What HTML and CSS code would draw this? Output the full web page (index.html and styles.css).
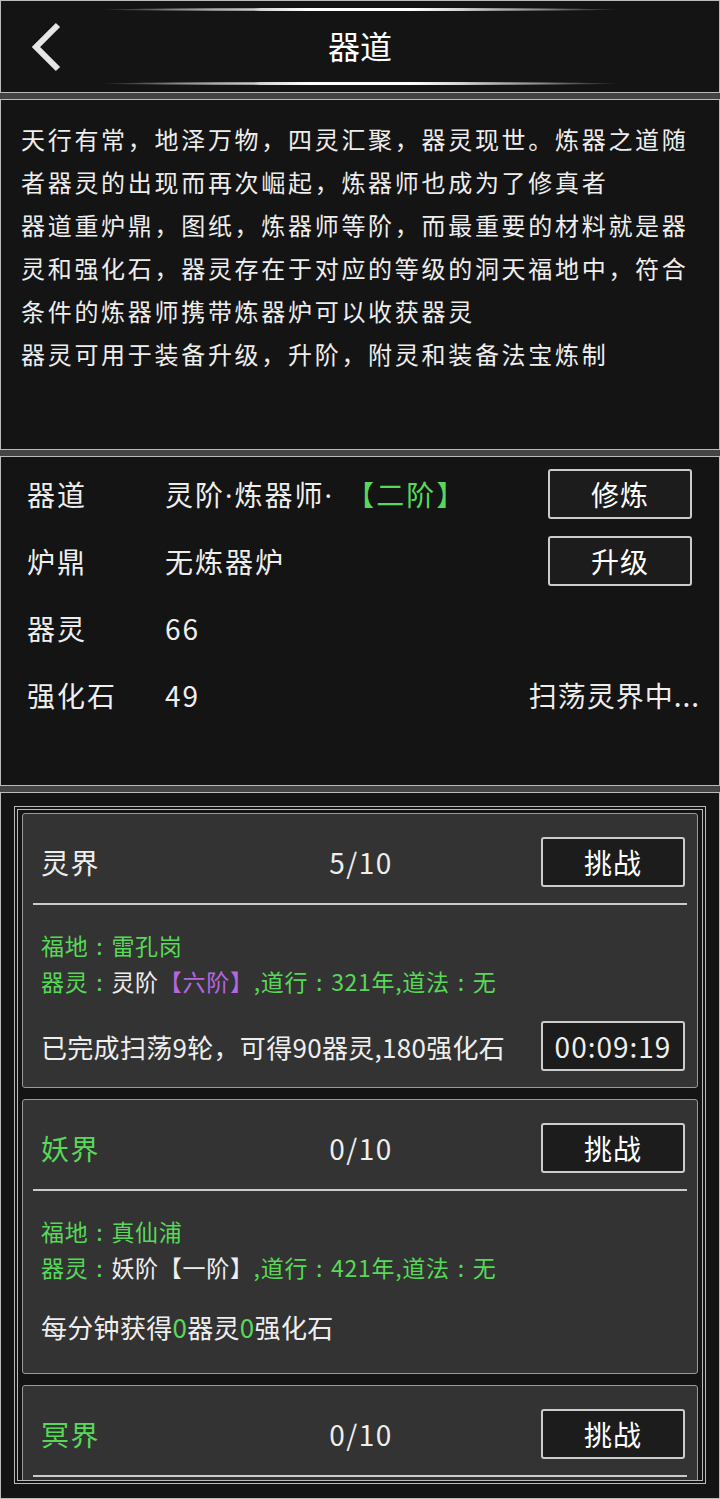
FILE: index.html
```html
<!DOCTYPE html>
<html lang="zh-CN">
  <head>
    <meta charset="UTF-8">
    <meta name="viewport" content="width=device-width, initial-scale=1.0">
    <title>器道</title>
    <link rel="stylesheet" href="styles.css">
  </head>
  <body>
    <div class="screen">
      <!-- Title bar -->
      <header class="panel topbar">
        <div class="glow"></div>
        <div class="topbar-row">
          <span class="back">
            <svg width="34" height="50" viewBox="0 0 34 50"><polyline points="28,3 6,25 28,47" fill="none" stroke="#e6e6e6" stroke-width="6"/></svg>
          </span>
          <h1>器道</h1>
          <span></span>
        </div>
        <div class="glow"></div>
      </header>

      <!-- Intro text -->
      <section class="panel intro">
        <p>天行有常，地泽万物，四灵汇聚，器灵现世。炼器之道随者器灵的出现而再次崛起，炼器师也成为了修真者</p>
        <p>器道重炉鼎，图纸，炼器师等阶，而最重要的材料就是器灵和强化石，器灵存在于对应的等级的洞天福地中，符合条件的炼器师携带炼器炉可以收获器灵</p>
        <p>器灵可用于装备升级，升阶，附灵和装备法宝炼制</p>
      </section>

      <!-- Stats -->
      <section class="panel stats">
        <div class="stat-row">
          <span class="stat-label">器道</span>
          <span class="stat-value">灵阶<span class="dot">·</span>炼器师<span class="dot">·</span> <span class="green">【二阶】</span></span>
          <button class="btn">修炼</button>
        </div>
        <div class="stat-row">
          <span class="stat-label">炉鼎</span>
          <span class="stat-value">无炼器炉</span>
          <button class="btn">升级</button>
        </div>
        <div class="stat-row">
          <span class="stat-label">器灵</span>
          <span class="stat-value">66</span>
          <span></span>
        </div>
        <div class="stat-row">
          <span class="stat-label">强化石</span>
          <span class="stat-value">49</span>
          <span class="stat-note">扫荡灵界中...</span>
        </div>
      </section>

      <!-- Realms list -->
      <section class="panel realms">
        <div class="realm-frame">
          <div class="realm-card">
            <div class="realm-head">
              <span class="realm-name">灵界</span>
              <span class="realm-count">5/10</span>
              <button class="btn">挑战</button>
            </div>
            <div class="realm-sep"></div>
            <div class="realm-info">
              <div class="green">福地<span class="colon">:</span>雷孔岗</div>
              <div class="green">器灵<span class="colon">:</span><span class="white">灵阶</span><span class="purple">【六阶】</span>,道行<span class="colon">:</span>321年,道法<span class="colon">:</span>无</div>
            </div>
            <div class="realm-status">
              <span>已完成扫荡9轮，可得90器灵,180强化石</span>
              <span class="timer">00:09:19</span>
            </div>
          </div>

          <div class="realm-card">
            <div class="realm-head">
              <span class="realm-name green">妖界</span>
              <span class="realm-count">0/10</span>
              <button class="btn">挑战</button>
            </div>
            <div class="realm-sep"></div>
            <div class="realm-info">
              <div class="green">福地<span class="colon">:</span>真仙浦</div>
              <div class="green">器灵<span class="colon">:</span><span class="white">妖阶【一阶】</span>,道行<span class="colon">:</span>421年,道法<span class="colon">:</span>无</div>
            </div>
            <div class="realm-status plain">
              <span>每分钟获得<span class="green">0</span>器灵<span class="green">0</span>强化石</span>
            </div>
          </div>

          <div class="realm-card">
            <div class="realm-head">
              <span class="realm-name green">冥界</span>
              <span class="realm-count">0/10</span>
              <button class="btn">挑战</button>
            </div>
            <div class="realm-sep"></div>
          </div>
        </div>
      </section>
    </div>
  </body>
</html>
```

FILE: styles.css
```css
* {
  box-sizing: border-box;
}

body {
  margin: 0;
  background-color: #444;
  font-family: 'Noto Sans CJK SC', 'Noto Sans', sans-serif;
  color: #eee;
}

.screen {
  width: 720px;
  height: 1499px;
  display: flex;
  flex-direction: column;
  gap: 6px;
  overflow: hidden;
}

.panel {
  background-color: #141414;
  border: 1px solid #bbb;
}

.green {
  color: #58d858;
}

.white {
  color: #eee;
}

.purple {
  color: #b766e0;
}

/* full-width slot with the colon centred in it */
.colon {
  display: inline-block;
  width: 1em;
  text-align: center;
}

.dot {
  font-family: 'Noto Sans', sans-serif;
}

/* Title bar */
.topbar {
  height: 93px;
  padding-top: 7px;
  display: flex;
  flex-direction: column;
  align-items: center;
}

.glow {
  width: 520px;
  height: 3px;
  border-radius: 50%;
  background: linear-gradient(90deg, rgba(255, 255, 255, 0) 0%, rgba(255, 255, 255, 0.5) 15%, #fff 40%, #fff 60%, rgba(255, 255, 255, 0.5) 85%, rgba(255, 255, 255, 0) 100%);
}

.topbar-row {
  width: 100%;
  height: 71px;
  display: grid;
  grid-template-columns: 1fr auto 1fr;
  align-items: center;
}

.back {
  padding-left: 29px;
  display: flex;
}

h1 {
  margin: -4px 0 0;
  font-size: 32px;
  font-weight: normal;
  color: #fff;
  line-height: 1;
}

/* Intro text */
.intro {
  height: 351px;
  padding: 17px 18px 0 20px;
}

.intro p {
  margin: 0;
  font-size: 24px;
  line-height: 43px;
  letter-spacing: 2.7px;
}

/* Stats */
.stats {
  height: 330px;
  padding: 3px 27px 0 26px;
}

.stat-row {
  height: 67px;
  display: grid;
  grid-template-columns: 138px 1fr auto;
  align-items: center;
  font-size: 28px;
  letter-spacing: 2px;
}

.stat-value .green {
  margin-left: 4px;
}

.stat-note {
  margin-right: -8px;
  white-space: nowrap;
  letter-spacing: 1px;
}

.btn {
  width: 144px;
  height: 50px;
  background-color: #1c1c1c;
  border: 2px solid #ccc;
  border-radius: 3px;
  color: #fff;
  font-family: inherit;
  font-size: 28px;
  letter-spacing: 1px;
  padding: 0;
  cursor: pointer;
}

/* Realms */
.realms {
  flex: 1;
  padding: 13px;
}

.realm-frame {
  height: 678px;
  border: 4px double #bbb;
  padding: 3px 4px 0;
  display: flex;
  flex-direction: column;
  gap: 11px;
  overflow: hidden;
}

.realm-card {
  flex-shrink: 0;
  background-color: #333;
  border: 1px solid #999;
  border-radius: 3px;
  padding: 23px 0 16px;
}

.realm-head {
  height: 50px;
  padding: 0 12px 0 18px;
  display: grid;
  grid-template-columns: 1fr auto 1fr;
  align-items: center;
  font-size: 28px;
  letter-spacing: 1.5px;
}

.realm-count {
  margin-left: -4px;
}

.realm-head .btn {
  justify-self: end;
}

.realm-sep {
  height: 2px;
  margin: 16px 10px 0;
  background-color: #ccc;
}

.realm-info {
  margin-top: 22px;
  padding-left: 18px;
  font-size: 23px;
  line-height: 36px;
  letter-spacing: 0.7px;
}

.realm-status {
  margin-top: 22px;
  height: 50px;
  padding: 0 12px 0 18px;
  display: flex;
  align-items: center;
  justify-content: space-between;
  font-size: 26px;
  letter-spacing: 0.3px;
}

.realm-status.plain {
  align-items: flex-start;
  line-height: 40px;
}

.timer {
  width: 144px;
  height: 50px;
  display: flex;
  align-items: center;
  justify-content: center;
  background-color: #1c1c1c;
  border: 2px solid #ccc;
  border-radius: 3px;
  font-size: 28px;
  letter-spacing: 1px;
}
```
